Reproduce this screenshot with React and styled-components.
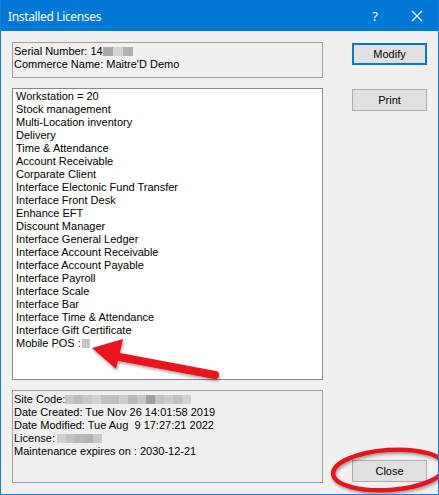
import React from 'react';
import styled, { createGlobalStyle } from 'styled-components';

const GlobalStyle = createGlobalStyle`
	html, body {
		margin: 0;
		padding: 0;
		background: #f0f0f0;
	}
`;

const licenses = [
	'Workstation = 20',
	'Stock management',
	'Multi-Location inventory',
	'Delivery',
	'Time & Attendance',
	'Account Receivable',
	'Corparate Client',
	'Interface Electonic Fund Transfer',
	'Interface Front Desk',
	'Enhance EFT',
	'Discount Manager',
	'Interface General Ledger',
	'Interface Account Receivable',
	'Interface Account Payable',
	'Interface Payroll',
	'Interface Scale',
	'Interface Bar',
	'Interface Time & Attendance',
	'Interface Gift Certificate',
];

const Redact = ({ shades, size = 9, gap = 0 }) => (
	<RedactWrap style={{ marginLeft: gap }}>
		{shades.map((s, i) => (
			<RedactBlock key={i} style={{ background: s, width: size }} />
		))}
	</RedactWrap>
);

const App = () => {
	return (
		<>
			<GlobalStyle />
			<Window>
				<TitleBar>
					<Title>Installed Licenses</Title>
					<TitleButtons>
						<Help>?</Help>
						<svg width='12' height='12' viewBox='0 0 12 12'>
							<path d='M1 1 L11 11 M11 1 L1 11' stroke='#fff' strokeWidth='1.1' />
						</svg>
					</TitleButtons>
				</TitleBar>
				<Body>
					<LeftColumn>
						<InfoBox $height={36}>
							<Line>
								Serial Number: 14
								<Redact shades={['#a9a9a9', '#d3d3d3', '#b2b2b2']} size={10} />
							</Line>
							<Line>Commerce Name: Maitre'D Demo</Line>
						</InfoBox>
						<ListBox>
							{licenses.map((l) => (
								<Line key={l}>{l}</Line>
							))}
							<Line>
								Mobile POS :<Redact shades={['#c4c4c4']} size={8} gap={1} />
							</Line>
						</ListBox>
						<InfoBox $height={93}>
							<Line>
								Site Code:
								<Redact
									shades={[
										'#c8c8c8', '#bdbdbd', '#c9c9c9', '#d3d3d3', '#c1c1c1',
										'#bfbfbf', '#cfcfcf', '#b9b9b9', '#c6c6c6', '#9e9e9e',
										'#c3c3c3', '#cdcdcd', '#c0c0c0', '#d1d1d1',
									]}
									size={9}
								/>
							</Line>
							<Line>Date Created: Tue Nov 26 14:01:58 2019</Line>
							<Line>Date Modified: Tue Aug &nbsp;9 17:27:21 2022</Line>
							<Line>
								License:
								<Redact
									shades={['#d0d0d0', '#c2c2c2', '#b9b9b9', '#b4b4b4', '#c9c9c9']}
									size={9}
									gap={2}
								/>
							</Line>
							<Line>Maintenance expires on : 2030-12-21</Line>
						</InfoBox>
					</LeftColumn>
					<RightColumn>
						<Button $focused>Modify</Button>
						<Button $top={24}>Print</Button>
						<Button $bottom>Close</Button>
					</RightColumn>
				</Body>
				<Annotations width='439' height='495' viewBox='0 0 439 495'>
					<defs>
						<filter id='sh' x='-20%' y='-20%' width='140%' height='160%'>
							<feDropShadow dx='1' dy='2' stdDeviation='1.6' floodColor='#000' floodOpacity='0.35' />
						</filter>
					</defs>
					<g filter='url(#sh)'>
						<line x1='114' y1='356' x2='215' y2='375' stroke='#e8141c' strokeWidth='8' strokeLinecap='round' />
						<polygon points='92,348 123,339 116,369' fill='#e8141c' />
					</g>
					<g filter='url(#sh)'>
						<ellipse
							cx='389'
							cy='470'
							rx='56'
							ry='20'
							fill='none'
							stroke='#e4151c'
							strokeWidth='4.5'
							transform='rotate(-4 389 470)'
						/>
					</g>
				</Annotations>
			</Window>
		</>
	);
};

export default App;

const Window = styled.div`
	position: relative;
	width: 439px;
	height: 495px;
	box-sizing: border-box;
	border: 1px solid #1a7fd4;
	border-top: none;
	background: #f0f0f0;
	overflow: hidden;
	font-family: 'Liberation Sans', Arial, sans-serif;
`;

const TitleBar = styled.div`
	height: 31px;
	background: #0078d7;
	display: flex;
	align-items: center;
	justify-content: space-between;
	padding: 0 16px 0 8px;
	box-sizing: border-box;
	margin: 0 -1px;
`;

const Title = styled.div`
	color: #fff;
	font-family: 'Noto Sans', 'Open Sans', sans-serif;
	font-size: 12px;
	letter-spacing: -0.35px;
	padding-top: 1px;
`;

const TitleButtons = styled.div`
	display: flex;
	align-items: center;
	gap: 33px;
`;

const Help = styled.span`
	color: #fff;
	font-family: 'Noto Sans', sans-serif;
	font-size: 13px;
`;

const Body = styled.div`
	display: flex;
	padding: 11px 0 0 11px;
	height: 452px;
	box-sizing: border-box;
`;

const LeftColumn = styled.div`
	width: 311px;
	display: flex;
	flex-direction: column;
	gap: 10px;
`;

const InfoBox = styled.div`
	height: ${(p) => p.$height}px;
	box-sizing: border-box;
	border: 1px solid #a0a0a0;
	padding: 2px 1px;
	color: #000;
`;

const ListBox = styled.div`
	height: 293px;
	box-sizing: border-box;
	background: #fff;
	border: 1px solid #828790;
	padding: 1px 3px;
`;

const Line = styled.div`
	font-size: 11px;
	line-height: 13px;
	height: 13px;
	white-space: nowrap;
	color: #000;
	display: flex;
	align-items: center;
`;

const RedactWrap = styled.span`
	display: inline-flex;
	height: 9px;
`;

const RedactBlock = styled.span`
	display: block;
	height: 9px;
`;

const RightColumn = styled.div`
	display: flex;
	flex-direction: column;
	margin-left: 29px;
	padding-top: 1px;
	padding-bottom: 1px;
`;

const Button = styled.div`
	width: 75px;
	height: 22px;
	box-sizing: border-box;
	margin-top: ${(p) => (p.$bottom ? 'auto' : `${p.$top || 0}px`)};
	background: #e1e1e1;
	border: ${(p) => (p.$focused ? '2px solid #0078d7' : '1px solid #adadad')};
	display: flex;
	align-items: center;
	justify-content: center;
	font-size: 11px;
	color: #000;
`;

const Annotations = styled.svg`
	position: absolute;
	left: -1px;
	top: 0;
	pointer-events: none;
`;
